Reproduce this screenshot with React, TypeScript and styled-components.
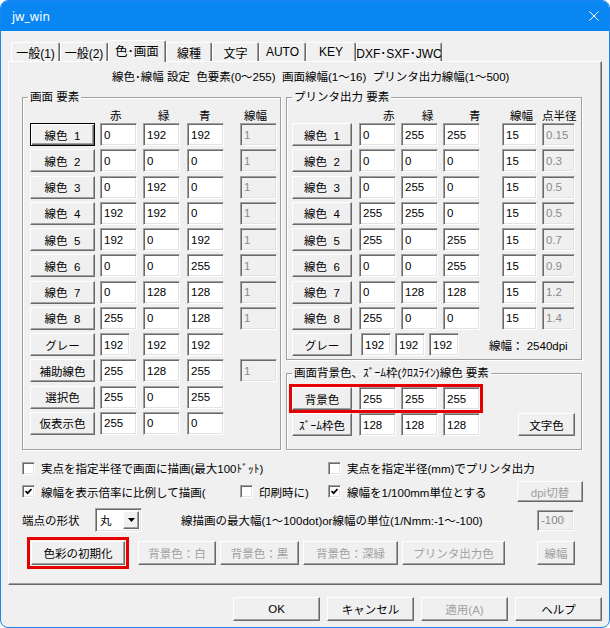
import React from "react";
import styled, { createGlobalStyle } from "styled-components";

const FONT = `"Liberation Sans", "Noto Sans CJK JP", sans-serif`;

const Global = createGlobalStyle`
  * { box-sizing: border-box; }
  html, body { margin: 0; padding: 0; background: #ffffff; }
  body { font-family: ${FONT}; font-size: 11.5px; color: #000; }
`;

const Window = styled.div`
  width: 610px;
  height: 628px;
  border: 1px solid #1a85ee;
  border-radius: 8px;
  overflow: hidden;
  background: #f0f0f0;
`;

const TitleBar = styled.div`
  height: 30px;
  background: #0a86f2;
  color: #fff;
  display: flex;
  align-items: center;
  justify-content: space-between;
  padding: 0 10px 0 11px;
  font-family: "Noto Sans", "Liberation Sans", sans-serif;
  font-size: 12px;
`;

const Body = styled.div`
  padding: 9px 0 0 7px;
  display: flex;
  flex-direction: column;
`;

const TabStrip = styled.div`
  display: flex;
  align-items: flex-end;
  height: 21px;
  margin-left: 3px;
`;

const Tab = styled.div<{ $w: number; $active?: boolean }>`
  width: ${(p) => p.$w}px;
  height: ${(p) => (p.$active ? 22 : 19)}px;
  margin-bottom: ${(p) => (p.$active ? -1 : 0)}px;
  position: relative;
  z-index: ${(p) => (p.$active ? 2 : 1)};
  background: #f0f0f0;
  border-top: 1px solid #fff;
  border-left: 1px solid #fff;
  border-right: 1px solid #696969;
  box-shadow: inset -1px 0 0 #a0a0a0;
  border-top-left-radius: 2px;
  border-top-right-radius: 2px;
  display: flex;
  align-items: center;
  justify-content: center;
  padding-bottom: ${(p) => (p.$active ? 2 : 0)}px;
  font-size: ${(p) => (p.$active ? 12.5 : 12)}px;
  white-space: nowrap;
`;

const Panel = styled.div`
  width: 594px;
  height: 524px;
  border-top: 1px solid #fff;
  border-left: 1px solid #fff;
  border-right: 1px solid #696969;
  border-bottom: 1px solid #696969;
  box-shadow: inset -1px -1px 0 #a0a0a0;
  padding: 8px 0 0 13px;
  display: flex;
  flex-direction: column;
`;

const Header = styled.div`
  line-height: 14px;
  margin-left: 90px;
  white-space: pre;
`;

const Columns = styled.div`
  display: flex;
  gap: 5px;
  margin-top: 6px;
  align-items: stretch;
`;

const RightColumn = styled.div`
  width: 296px;
  display: flex;
  flex-direction: column;
  gap: 6px;
`;

const Group = styled.fieldset<{ $w?: number; $grow?: boolean; $pt: number; $pb: number }>`
  margin: 0;
  min-width: 0;
  ${(p) => (p.$w ? `width: ${p.$w}px;` : "")}
  ${(p) => (p.$grow ? "flex: 1;" : "")}
  border: 1px solid #a0a0a0;
  box-shadow: 1px 1px 0 #fff, inset 1px 1px 0 #fff;
  padding: ${(p) => p.$pt}px 2px ${(p) => p.$pb}px 5px;
`;

const Legend = styled.legend`
  padding: 0 2px;
  margin-left: 0;
  line-height: 14px;
  white-space: nowrap;
`;

const Shifted = styled.div`
  margin-left: 2px;
`;

const HeadRow = styled.div<{ $cols: string }>`
  display: grid;
  grid-template-columns: ${(p) => p.$cols};
  height: 13px;
  line-height: 12px;
  white-space: nowrap;
`;

const HeadLabel = styled.span<{ $pad: number }>`
  padding-left: ${(p) => p.$pad}px;
`;

const Grid = styled.div<{ $cols: string }>`
  display: grid;
  grid-template-columns: ${(p) => p.$cols};
  grid-auto-rows: 23px;
  row-gap: 3.27px;
  align-items: center;
  justify-items: start;
`;

const Btn = styled.button<{ $w: number; $h?: number; $default?: boolean; $hl?: boolean }>`
  width: ${(p) => p.$w}px;
  height: ${(p) => p.$h ?? 23}px;
  padding: 0;
  margin: 0;
  font-family: ${FONT};
  font-size: 11.5px;
  color: #000;
  background: #f0f0f0;
  white-space: pre;
  border-top: 1px solid ${(p) => (p.$default ? "#000" : "#fff")};
  border-left: 1px solid ${(p) => (p.$default ? "#000" : "#fff")};
  border-right: 1px solid ${(p) => (p.$default ? "#000" : "#696969")};
  border-bottom: 1px solid ${(p) => (p.$default ? "#000" : "#696969")};
  box-shadow: ${(p) =>
    p.$default
      ? "inset 1px 1px 0 #fff, inset -1px -1px 0 #696969, inset -2px -2px 0 #a0a0a0"
      : "inset -1px -1px 0 #a0a0a0"};
  ${(p) => (p.$hl ? "outline: 3px solid #e60000; outline-offset: 1px;" : "")}
  &:disabled {
    color: #a0a0a0;
  }
`;

const Field = styled.input<{ $w?: number; $h?: number }>`
  width: ${(p) => p.$w ?? 37}px;
  height: ${(p) => p.$h ?? 23}px;
  margin: 0;
  border-top: 1px solid #a0a0a0;
  border-left: 1px solid #a0a0a0;
  border-right: 1px solid #fff;
  border-bottom: 1px solid #fff;
  box-shadow: inset 1px 1px 0 #696969, inset -1px -1px 0 #e3e3e3;
  background: #fff;
  padding: 0 0 0 3px;
  font-family: ${FONT};
  font-size: 11.5px;
  color: #000;
  outline: none;
  &:disabled {
    background: #f0f0f0;
    color: #8a8a8a;
  }
`;

const GrayRow = styled.div`
  grid-column: 1 / -1;
  display: flex;
  align-items: center;
  height: 23px;
`;

const GapField = styled(Field)<{ $ml: number }>`
  margin-left: ${(p) => p.$ml}px;
`;

const Dpi = styled.span`
  margin-left: 30px;
  white-space: pre;
`;

const Highlight = styled.div`
  grid-column: 1 / -1;
  justify-self: start;
  display: grid;
  grid-template-columns: 67px 42px 42px 37px;
  align-items: center;
  height: 23px;
  outline: 3px solid #e60000;
  outline-offset: 0;
`;

const EndCell = styled.div`
  grid-column: 5 / 7;
  justify-self: end;
`;

const Bottom = styled.div`
  display: flex;
  flex-direction: column;
`;

const OptRow = styled.div<{ $cols: string; $h: number; $mt: number }>`
  display: grid;
  grid-template-columns: ${(p) => p.$cols};
  height: ${(p) => p.$h}px;
  margin-top: ${(p) => p.$mt}px;
  align-items: center;
  justify-items: start;
  white-space: nowrap;
`;

const Check = styled.label`
  display: flex;
  align-items: center;
  gap: 6px;
  white-space: pre;
`;

const Box = styled.span`
  width: 13px;
  height: 13px;
  flex: none;
  background: #fff;
  border-top: 1px solid #a0a0a0;
  border-left: 1px solid #a0a0a0;
  border-right: 1px solid #fff;
  border-bottom: 1px solid #fff;
  box-shadow: inset 1px 1px 0 #696969, inset -1px -1px 0 #e3e3e3;
  display: flex;
  align-items: center;
  justify-content: center;
`;

const Select = styled.div`
  width: 47px;
  height: 24px;
  display: flex;
  align-items: stretch;
  background: #fff;
  border-top: 1px solid #a0a0a0;
  border-left: 1px solid #a0a0a0;
  border-right: 1px solid #fff;
  border-bottom: 1px solid #fff;
  box-shadow: inset 1px 1px 0 #696969, inset -1px -1px 0 #e3e3e3;
  padding: 2px;
`;

const SelectText = styled.span`
  flex: 1;
  display: flex;
  align-items: center;
  padding-left: 2px;
`;

const SelectArrow = styled.span`
  width: 16px;
  background: #f0f0f0;
  border-top: 1px solid #fff;
  border-left: 1px solid #fff;
  border-right: 1px solid #696969;
  border-bottom: 1px solid #696969;
  box-shadow: inset -1px -1px 0 #a0a0a0;
  display: flex;
  align-items: center;
  justify-content: center;
`;

const FooterRow = styled.div`
  width: 594px;
  margin-top: 12px;
  display: flex;
  justify-content: flex-end;
  gap: 7px;
`;

const CloseIcon = () => (
  <svg width="10" height="10" viewBox="0 0 10 10">
    <path d="M0.5 0.5 L9.5 9.5 M9.5 0.5 L0.5 9.5" stroke="#fff" strokeWidth="1" />
  </svg>
);

const CheckMark = () => (
  <svg width="7" height="7" viewBox="0 0 7 7">
    <polyline points="0.5,3 2.6,5.2 6.5,1" fill="none" stroke="#000" strokeWidth="1.7" />
  </svg>
);

const Arrow = () => (
  <svg width="7" height="4" viewBox="0 0 7 4">
    <polygon points="0,0 7,0 3.5,4" fill="#000" />
  </svg>
);

const CheckItem = ({ checked, label }: { checked?: boolean; label: string }) => (
  <Check>
    <Box>{checked ? <CheckMark /> : null}</Box>
    <span>{label}</span>
  </Check>
);

const tabs = [
  { label: "一般(1)", w: 49 },
  { label: "一般(2)", w: 48 },
  { label: "色･画面", w: 58, active: true },
  { label: "線種", w: 46 },
  { label: "文字", w: 47 },
  { label: "AUTO", w: 47 },
  { label: "KEY", w: 50 },
  { label: "DXF･SXF･JWC", w: 86 },
];

const LEFT_COLS = "70px 43px 44px 53px 37px";
const RIGHT_COLS = "67px 42px 42px 59px 40px 33px";

type LeftRow = { name: string; rgb: number[]; width?: string; narrow?: boolean; def?: boolean };

const leftRows: LeftRow[] = [
  { name: "線色  1", rgb: [0, 192, 192], width: "1", def: true },
  { name: "線色  2", rgb: [0, 0, 0], width: "1" },
  { name: "線色  3", rgb: [0, 192, 0], width: "1" },
  { name: "線色  4", rgb: [192, 192, 0], width: "1" },
  { name: "線色  5", rgb: [192, 0, 192], width: "1" },
  { name: "線色  6", rgb: [0, 0, 255], width: "1" },
  { name: "線色  7", rgb: [0, 128, 128], width: "1" },
  { name: "線色  8", rgb: [255, 0, 128], width: "1" },
  { name: "グレー", rgb: [192, 192, 192], narrow: true },
  { name: "補助線色", rgb: [255, 128, 255], width: "1" },
  { name: "選択色", rgb: [255, 0, 255] },
  { name: "仮表示色", rgb: [255, 0, 0] },
];

const rightRows = [
  { name: "線色  1", rgb: [0, 255, 255], r: "0.15" },
  { name: "線色  2", rgb: [0, 0, 0], r: "0.3" },
  { name: "線色  3", rgb: [0, 255, 0], r: "0.5" },
  { name: "線色  4", rgb: [255, 255, 0], r: "0.5" },
  { name: "線色  5", rgb: [255, 0, 255], r: "0.7" },
  { name: "線色  6", rgb: [0, 0, 255], r: "0.9" },
  { name: "線色  7", rgb: [0, 128, 128], r: "1.2" },
  { name: "線色  8", rgb: [255, 0, 0], r: "1.4" },
];

export default function App() {
  return (
    <>
      <Global />
      <Window>
        <TitleBar>
          <span>jw_win</span>
          <CloseIcon />
        </TitleBar>
        <Body>
          <TabStrip>
            {tabs.map((t) => (
              <Tab key={t.label} $w={t.w} $active={t.active}>
                {t.label}
              </Tab>
            ))}
          </TabStrip>
          <Panel>
            <Header>{"線色･線幅 設定  色要素(0〜255)  画面線幅(1〜16)  プリンタ出力線幅(1〜500)"}</Header>
            <Columns>
              <Group $w={259} $pt={6} $pb={14}>
                <Legend>画面 要素</Legend>
                <Shifted>
                  <HeadRow $cols={LEFT_COLS}>
                    <span />
                    <HeadLabel $pad={10}>赤</HeadLabel>
                    <HeadLabel $pad={15}>緑</HeadLabel>
                    <HeadLabel $pad={12}>青</HeadLabel>
                    <HeadLabel $pad={4}>線幅</HeadLabel>
                  </HeadRow>
                  <Grid $cols={LEFT_COLS}>
                    {leftRows.map((r) => (
                      <React.Fragment key={r.name}>
                        <Btn $w={65} $default={r.def}>
                          {r.name}
                        </Btn>
                        <Field $w={r.narrow ? 30 : 37} defaultValue={String(r.rgb[0])} />
                        <Field defaultValue={String(r.rgb[1])} />
                        <Field defaultValue={String(r.rgb[2])} />
                        {r.width ? <Field disabled defaultValue={r.width} /> : <span />}
                      </React.Fragment>
                    ))}
                  </Grid>
                </Shifted>
              </Group>
              <RightColumn>
                <Group $pt={6} $pb={3}>
                  <Legend>プリンタ出力 要素</Legend>
                  <HeadRow $cols={RIGHT_COLS}>
                    <span />
                    <HeadLabel $pad={24}>赤</HeadLabel>
                    <HeadLabel $pad={21}>緑</HeadLabel>
                    <HeadLabel $pad={26}>青</HeadLabel>
                    <HeadLabel $pad={8}>線幅</HeadLabel>
                    <HeadLabel $pad={0}>点半径</HeadLabel>
                  </HeadRow>
                  <Grid $cols={RIGHT_COLS}>
                    {rightRows.map((r) => (
                      <React.Fragment key={r.name}>
                        <Btn $w={60}>{r.name}</Btn>
                        <Field defaultValue={String(r.rgb[0])} />
                        <Field defaultValue={String(r.rgb[1])} />
                        <Field defaultValue={String(r.rgb[2])} />
                        <Field $w={35} defaultValue="15" />
                        <Field $w={33} disabled defaultValue={r.r} />
                      </React.Fragment>
                    ))}
                    <GrayRow>
                      <Btn $w={60}>グレー</Btn>
                      <GapField $ml={9} $w={30} defaultValue="192" />
                      <GapField $ml={4} $w={30} defaultValue="192" />
                      <GapField $ml={4} $w={30} defaultValue="192" />
                      <Dpi>{"線幅： 2540dpi"}</Dpi>
                    </GrayRow>
                  </Grid>
                </Group>
                <Group $grow $pt={7} $pb={13}>
                  <Legend>画面背景色、ｽﾞｰﾑ枠(ｸﾛｽﾗｲﾝ)線色 要素</Legend>
                  <Grid $cols={RIGHT_COLS}>
                    <Highlight>
                      <Btn $w={60}>背景色</Btn>
                      <Field defaultValue="255" />
                      <Field defaultValue="255" />
                      <Field defaultValue="255" />
                    </Highlight>
                    <Btn $w={60}>ｽﾞｰﾑ枠色</Btn>
                    <Field defaultValue="128" />
                    <Field defaultValue="128" />
                    <Field defaultValue="128" />
                    <EndCell>
                      <Btn $w={57}>文字色</Btn>
                    </EndCell>
                  </Grid>
                </Group>
              </RightColumn>
            </Columns>
            <Bottom>
              <OptRow $cols="306px auto" $h={13} $mt={10}>
                <CheckItem label="実点を指定半径で画面に描画(最大100ﾄﾞｯﾄ)" />
                <CheckItem label="実点を指定半径(mm)でプリンタ出力" />
              </OptRow>
              <OptRow $cols="218px 88px 189px 66px" $h={21} $mt={8}>
                <CheckItem checked label="線幅を表示倍率に比例して描画(" />
                <CheckItem label="印刷時に)" />
                <CheckItem checked label="線幅を1/100mm単位とする" />
                <Btn $w={66} $h={21} disabled>
                  dpi切替
                </Btn>
              </OptRow>
              <OptRow $cols="73px 86px 356px 37px" $h={24} $mt={6}>
                <span>端点の形状</span>
                <Select>
                  <SelectText>丸</SelectText>
                  <SelectArrow>
                    <Arrow />
                  </SelectArrow>
                </Select>
                <span>線描画の最大幅(1〜100dot)or線幅の単位(1/Nmm:-1〜-100)</span>
                <Field $w={37} $h={21} disabled defaultValue="-100" />
              </OptRow>
              <OptRow $cols="9px 107px 82px 83px 99px 135px 38px" $h={24} $mt={9}>
                <span />
                <Btn $w={94} $h={24} $hl>
                  色彩の初期化
                </Btn>
                <Btn $w={78} $h={24} disabled>
                  背景色：白
                </Btn>
                <Btn $w={79} $h={24} disabled>
                  背景色：黒
                </Btn>
                <Btn $w={95} $h={24} disabled>
                  背景色：深緑
                </Btn>
                <Btn $w={103} $h={24} disabled>
                  プリンタ出力色
                </Btn>
                <Btn $w={38} $h={24} disabled>
                  線幅
                </Btn>
              </OptRow>
            </Bottom>
          </Panel>
          <FooterRow>
            <Btn $w={87} $h={24}>OK</Btn>
            <Btn $w={87} $h={24}>キャンセル</Btn>
            <Btn $w={87} $h={24} disabled>
              適用(A)
            </Btn>
            <Btn $w={87} $h={24}>ヘルプ</Btn>
          </FooterRow>
        </Body>
      </Window>
    </>
  );
}
